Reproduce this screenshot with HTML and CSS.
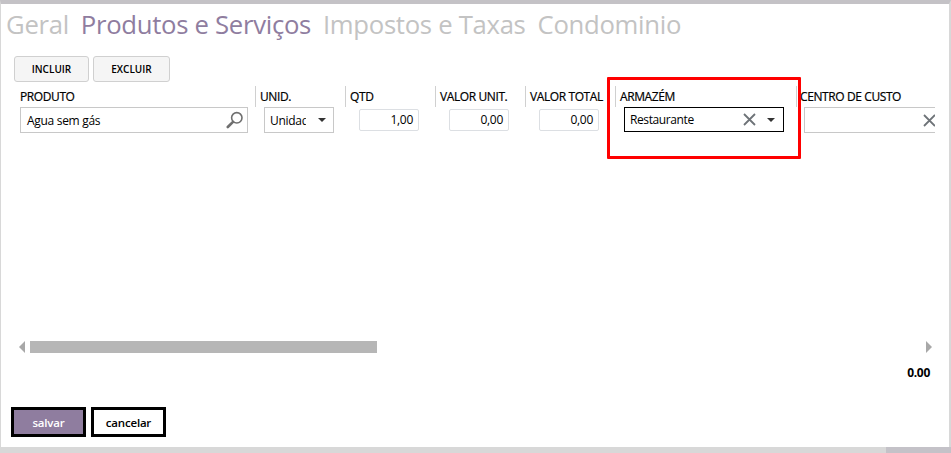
FILE: index.html
```html
<!DOCTYPE html>
<html lang="pt">
<head>
<meta charset="utf-8">
<title>Produtos e Serviços</title>
<link rel="stylesheet" href="styles.css">
</head>
<body>
<div class="window">
  <nav class="tabs">
    <span class="tab">Geral</span>
    <span class="tab active">Produtos e Serviços</span>
    <span class="tab">Impostos e Taxas</span>
    <span class="tab">Condominio</span>
  </nav>
  <div class="toolbar">
    <button class="tool tool-incluir">INCLUIR</button>
    <button class="tool tool-excluir">EXCLUIR</button>
  </div>
  <div class="grid">
    <div class="col col-produto">
      <div class="head">PRODUTO</div>
      <div class="field field-produto">
        <span class="value">Agua sem gás</span>
        <svg class="search" width="18" height="18" viewBox="0 0 18 18"><circle cx="10.8" cy="6.8" r="5.2" fill="none" stroke="#6f6f6f" stroke-width="1.6"/><path d="M7 10.8 1.8 16" stroke="#6f6f6f" stroke-width="2.6" stroke-linecap="round"/></svg>
      </div>
    </div>
    <div class="col col-unid">
      <div class="head">UNID.</div>
      <div class="field field-unid">
        <span class="value value-clip">Unidade</span>
        <span class="caret"></span>
      </div>
    </div>
    <div class="col col-num">
      <div class="head">QTD</div>
      <div class="num">1,00</div>
    </div>
    <div class="col col-num">
      <div class="head">VALOR UNIT.</div>
      <div class="num">0,00</div>
    </div>
    <div class="col col-num">
      <div class="head">VALOR TOTAL</div>
      <div class="num">0,00</div>
    </div>
    <div class="col col-armazem">
      <div class="head">ARMAZÉM</div>
      <div class="field field-armazem">
        <span class="value">Restaurante</span>
        <svg class="clear" width="13" height="13" viewBox="0 0 13 13"><path d="M1 1 12 12M12 1 1 12" stroke="#6e7378" stroke-width="1.8"/></svg>
        <span class="caret"></span>
      </div>
    </div>
    <div class="col col-centro">
      <div class="head">CENTRO DE CUSTO</div>
      <div class="field field-centro">
        <svg class="clear" width="13" height="13" viewBox="0 0 13 13"><path d="M1 1 12 12M12 1 1 12" stroke="#6e7378" stroke-width="1.8"/></svg>
      </div>
    </div>
    <div class="highlight"></div>
  </div>
  <div class="scrollbar">
    <span class="arrow arrow-left"></span>
    <div class="track"><div class="thumb"></div></div>
    <span class="arrow arrow-right"></span>
  </div>
  <div class="total">0.00</div>
  <div class="actions">
    <button class="action save">salvar</button>
    <button class="action cancel">cancelar</button>
  </div>
</div>
<div class="bottom-strip"><div class="strip-dark"></div></div>
</body>
</html>
```
FILE: styles.css
```css
* { box-sizing: border-box; }
html, body { margin: 0; padding: 0; }
body {
  width: 951px;
  height: 453px;
  overflow: hidden;
  background: #fff;
  font-family: "Open Sans", "Noto Sans", sans-serif;
  color: #000;
  display: flex;
  flex-direction: column;
}
.window {
  flex: 1;
  min-height: 0;
  display: flex;
  flex-direction: column;
  border-top: 4px solid #c4c2c6;
  border-left: 1px solid #d8d8d8;
  border-right: 2px solid #d8d8d8;
  background: #fff;
}
.bottom-strip {
  height: 6px;
  background: #d8d8d8;
  display: flex;
  justify-content: flex-end;
}
.strip-dark { width: 65px; background: #c4c2c8; }

.tabs {
  display: flex;
  gap: 12px;
  height: 38px;
  padding: 5px 0 0 5px;
  font-size: 25.7px;
  line-height: 32px;
  white-space: nowrap;
  letter-spacing: -0.3px;
}
.tab { color: #c3c3c3; }
.tab.active { color: #8f7d9f; }

.toolbar {
  display: flex;
  gap: 4px;
  height: 26px;
  margin-top: 14px;
  padding-left: 13px;
}
button { font-family: inherit; padding: 0; cursor: pointer; }
.tool {
  height: 26px;
  background: #f5f5f5;
  border: 1px solid #d0d0d0;
  border-radius: 3px;
  font-size: 10px;
  font-weight: 600;
  color: #000;
}
.tool-incluir { width: 75px; }
.tool-excluir { width: 77px; }

.grid {
  position: relative;
  display: flex;
  height: 64px;
  width: 934px;
  margin-top: 4px;
  flex-shrink: 0;
}
.col { flex-shrink: 0; }
.head {
  height: 21px;
  line-height: 22px;
  font-size: 12px;
  font-weight: 500;
  white-space: nowrap;
  letter-spacing: -0.4px;
  padding-left: 4px;
  border-left: 1px solid #d0d0d0;
  -webkit-text-stroke: 0.2px #000;
}
.col-produto { width: 240px; margin-left: 14px; }
.col-produto .head { border-left-color: transparent; }
.col-unid { width: 90px; }
.col-num { width: 90px; }
.col-armazem { width: 181px; }
.col-centro { width: 139px; overflow: hidden; }
.col-centro .head { padding-left: 3px; }

.field {
  display: flex;
  align-items: center;
  height: 26px;
  border: 1px solid #c8c8c8;
  background: #fff;
  font-size: 12px;
}
.value { white-space: nowrap; letter-spacing: -0.3px; }
.field-produto { width: 228px; margin-left: 5px; padding: 0 3px 0 6px; justify-content: space-between; }
.search { display: block; }
.field-unid { width: 70px; margin-left: 9px; padding: 0 7px 0 5px; justify-content: space-between; }
.value-clip { width: 36px; overflow: hidden; }
.field-armazem { width: 160px; height: 25px; margin-left: 9px; padding: 0 8px 0 5px; border-color: #000; }
.field-armazem .value { flex: 1; letter-spacing: -0.4px; }
.field-armazem .clear { margin-right: 11px; }
.field-centro { width: 135px; margin-left: 8px; padding-left: 118px; }
.caret {
  width: 0;
  height: 0;
  border-left: 4px solid transparent;
  border-right: 4px solid transparent;
  border-top: 4px solid #333;
}
.num {
  width: 60px;
  height: 22px;
  margin: 2px 0 0 14px;
  border: 1px solid #dcdfe3;
  border-radius: 2px;
  padding-right: 5px;
  text-align: right;
  font-size: 12px;
  line-height: 20px;
  letter-spacing: -0.3px;
}
.highlight {
  position: absolute;
  left: 606px;
  top: -9px;
  width: 194px;
  height: 82px;
  border: 3px solid #f00;
  border-radius: 1px;
  pointer-events: none;
}

.scrollbar {
  display: flex;
  align-items: center;
  height: 12px;
  margin-top: 191px;
  padding-left: 18px;
  width: 931px;
  flex-shrink: 0;
}
.arrow { width: 0; height: 0; border-top: 6px solid transparent; border-bottom: 6px solid transparent; }
.arrow-left { border-right: 6px solid #a8a8a8; }
.arrow-right { border-left: 6px solid #a8a8a8; }
.track { flex: 1; height: 12px; margin: 0 5px; }
.thumb { width: 347px; height: 12px; background: #b6b6b6; }

.total {
  margin-top: 11px;
  width: 929px;
  height: 17px;
  text-align: right;
  font-size: 12px;
  font-weight: 700;
  line-height: 17px;
  letter-spacing: -0.3px;
}
.actions {
  display: flex;
  gap: 5px;
  margin-top: 26px;
  padding-left: 10px;
}
.action {
  width: 75px;
  height: 30px;
  border: 3px solid #000;
  font-size: 11.5px;
  font-weight: 600;
  letter-spacing: -0.2px;
}
.save { background: #8f7d9f; color: #fff; }
.cancel { background: #fff; color: #000; }
```
